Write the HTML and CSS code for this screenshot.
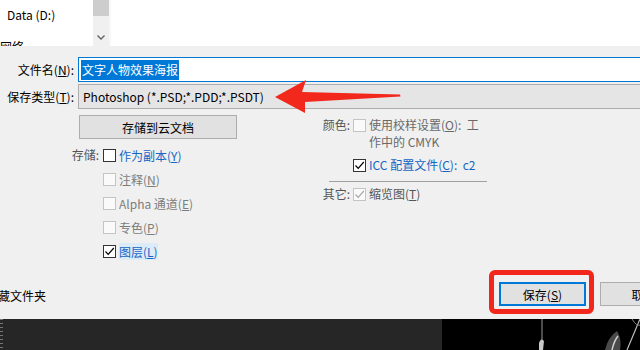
FILE: index.html
```html
<!DOCTYPE html>
<html lang="zh-CN">
<head>
<meta charset="utf-8">
<title>另存为</title>
<link rel="stylesheet" href="styles.css">
</head>
<body>
<div class="top">
  <div class="list">
    <div class="item">Data (D:)</div>
    <div class="item net">网络</div>
  </div>
  <div class="vscroll">
    <div class="thumb"></div>
    <svg class="chev" width="8" height="5" viewBox="0 0 8 5"><path d="M0.5 0.5 L4 4 L7.5 0.5" fill="none" stroke="#606060" stroke-width="1.3"/></svg>
  </div>
  <div class="pane"></div>
</div>

<div class="form">
  <div class="row">
    <div class="lbl">文件名(<u>N</u>):</div>
    <div class="input"><span class="sel">文字人物效果海报</span></div>
  </div>
  <div class="row r-type">
    <div class="lbl">保存类型(<u>T</u>):</div>
    <div class="select">Photoshop (*.PSD;*.PDD;*.PSDT)</div>
    <svg class="arrow" width="132" height="38" viewBox="0 0 132 38"><path d="M3 19 L34 2 L30 14 L128 16.5 L128.5 18.5 L33 24 L33 35 Z" fill="#f2281d"/></svg>
  </div>

  <div class="options">
    <div class="col-left">
      <button class="cloud">存储到云文档</button>
      <div class="group">
        <div class="glabel">存储:</div>
        <div class="checks">
          <div class="chk-row"><span class="cb"></span><span class="blue">作为副本(<u>Y</u>)</span></div>
          <div class="chk-row"><span class="cb dis"></span><span class="gray">注释(<u>N</u>)</span></div>
          <div class="chk-row"><span class="cb dis"></span><span class="gray">Alpha 通道(<u>E</u>)</span></div>
          <div class="chk-row"><span class="cb dis"></span><span class="gray">专色(<u>P</u>)</span></div>
          <div class="chk-row"><span class="cb on"><svg width="11" height="11" viewBox="0 0 11 11"><path d="M1.5 5.5 L4.2 8.3 L9.8 2" fill="none" stroke="#000" stroke-width="1.2"/></svg></span><span class="blue hl">图层(<u>L</u>)</span></div>
        </div>
      </div>
    </div>
    <div class="col-right">
      <div class="ropt">
        <div class="rlabel">颜色:</div>
        <span class="cb dis"></span>
        <div class="rtext gray2">使用校样设置(<u>O</u>):&nbsp; 工<br>作中的 CMYK</div>
      </div>
      <div class="ropt r-icc">
        <div class="rlabel"></div>
        <span class="cb on"><svg width="11" height="11" viewBox="0 0 11 11"><path d="M1.5 5.5 L4.2 8.3 L9.8 2" fill="none" stroke="#000" stroke-width="1.2"/></svg></span>
        <div class="rtext blue">ICC 配置文件(<u>C</u>):&nbsp; c2</div>
      </div>
      <div class="sep"></div>
      <div class="ropt r-other">
        <div class="rlabel">其它:</div>
        <span class="cb dis on"><svg width="11" height="11" viewBox="0 0 11 11"><path d="M1.5 5.5 L4.2 8.3 L9.8 2" fill="none" stroke="#a8a8a8" stroke-width="1.2"/></svg></span>
        <div class="rtext gray3">缩览图(<u>T</u>)</div>
      </div>
    </div>
  </div>
</div>

<div class="footer">
  <div class="hidden-txt">藏文件夹</div>
  <button class="btn save">保存(<u>S</u>)<span class="ring"></span></button>
  <button class="btn cancel">取消</button>
</div>

<div class="strip">
  <div class="strip-left"><span class="ticks"></span></div>
  <div class="strip-right">
    <svg width="198" height="31" viewBox="0 0 198 31">
      <path d="M100 0 L100 31" stroke="#9a9a9a" stroke-width="1"/>
      <path d="M97 24 Q99 18 102 22 L101 31 L97 31 Z" fill="#c8c8c8"/>
      <path d="M163 31 Q166 18 175 12 Q180 20 178 31 Z" fill="#4a4a4a"/>
      <path d="M170 31 Q172 22 176 17" stroke="#d0d0d0" stroke-width="1.5" fill="none"/>
      <path d="M185 31 L198 0" stroke="#bdbdbd" stroke-width="1.2" fill="none"/>
      <path d="M190 0 Q195 8 198 6" stroke="#888" stroke-width="1" fill="none"/>
    </svg>
  </div>
</div>
</body>
</html>
```

FILE: styles.css
```css
* { box-sizing: border-box; }
html, body { margin: 0; padding: 0; }
body {
  width: 640px;
  height: 350px;
  overflow: hidden;
  background: #f0f0f0;
  font-family: "Noto Sans CJK SC", "Microsoft YaHei", sans-serif;
  font-size: 12px;
  line-height: 17px;
  color: #000;
}
u { text-decoration: underline; text-underline-offset: 1px; }

/* top file list */
.top {
  height: 46px;
  display: flex;
  background: #fff;
}
.list {
  width: 93px;
  flex: none;
  padding: 7px 0 0 7px;
  overflow: hidden;
}
.list .item { line-height: 16px; white-space: nowrap; }
.list .net { margin-top: 16px; margin-left: -7px; }
.vscroll {
  width: 16px;
  flex: none;
  background: #f0f0f0;
  display: flex;
  flex-direction: column;
  align-items: center;
}
.thumb { width: 16px; height: 16px; background: #cdcdcd; }
.chev { margin-top: 19px; display: block; }
.pane { flex: 1; background: #fff; border-left: 2px solid #f7f7f7; }

/* form rows */
.form { padding-top: 11px; }
.row { display: flex; align-items: center; }
.lbl {
  width: 78px;
  flex: none;
  text-align: right;
  padding-right: 4px;
  white-space: nowrap;
}
.input {
  flex: none;
  width: 600px;
  height: 25px;
  border: 1px solid #0078d7;
  background: #fff;
  padding: 0 2px;
  display: flex;
  align-items: center;
}
.sel {
  background: #0078d7;
  color: #fff;
  line-height: 20px;
  padding: 0 1px;
}
.r-type { margin-top: 2px; position: relative; }
.select {
  flex: none;
  width: 600px;
  height: 25px;
  border: 1px solid #adadad;
  background: #e5e5e5;
  padding-left: 4px;
  display: flex;
  align-items: center;
  white-space: nowrap;
}
.arrow { position: absolute; left: 272px; top: -6px; }

/* options */
.options { display: flex; }
.col-left { width: 322px; flex: none; }
.cloud {
  display: block;
  margin: 6px 0 0 79px;
  width: 158px;
  height: 24px;
  padding: 0;
  border: 1px solid #adadad;
  background: #e1e1e1;
  font: inherit;
  color: #000;
}
.group { display: flex; margin-top: 4px; }
.glabel {
  width: 99px;
  flex: none;
  text-align: right;
  line-height: 24px;
  color: #555;
}
.checks { margin-left: 4px; }
.chk-row {
  height: 24px;
  display: flex;
  align-items: center;
  gap: 3px;
  white-space: nowrap;
}
.cb {
  width: 13px;
  height: 13px;
  flex: none;
  border: 1px solid #333;
  background: #fff;
  display: flex;
  align-items: center;
  justify-content: center;
}
.cb.dis { border-color: #c4c4c4; background: #fafafa; }
.cb svg { display: block; }
.blue { color: #1466c4; }
.gray { color: #7d7d7d; }
.gray2 { color: #6a6a6a; }
.gray3 { color: #555; }
.hl { background: #dcebf8; }

.col-right { padding-top: 7px; }
.ropt { display: flex; align-items: flex-start; }
.ropt .cb { margin-top: 3px; }
.rlabel {
  width: 31px;
  flex: none;
  text-align: right;
  padding-right: 3px;
  color: #555;
  white-space: nowrap;
}
.rtext { margin-left: 3px; white-space: nowrap; }
.r-icc { margin-top: 6px; }
.sep {
  margin: 8px 0 0 7px;
  width: 158px;
  height: 1px;
  background: #a0a0a0;
}
.r-other { margin-top: 3px; }

/* footer */
.footer {
  height: 56px;
  display: flex;
  align-items: flex-start;
  padding-top: 19px;
  overflow: hidden;
}
.hidden-txt {
  width: 501px;
  flex: none;
  line-height: 24px;
  padding-top: 2px;
  margin-left: -2px;
  white-space: nowrap;
}
.btn {
  width: 87px;
  height: 24px;
  flex: none;
  padding: 0;
  border: 1px solid #adadad;
  background: #e1e1e1;
  font: inherit;
  color: #000;
  position: relative;
}
.save { border: 2px solid #0078d7; }
.cancel { margin-left: 14px; }
.ring {
  position: absolute;
  left: -12px;
  top: -14px;
  width: 105px;
  height: 44px;
  border: 5px solid #f3261c;
  border-radius: 6px;
}

/* bottom strip */
.strip { height: 31px; display: flex; }
.strip-left { width: 442px; flex: none; background: #262626; position: relative; }
.ticks {
  display: block;
  width: 3px;
  height: 31px;
  background: repeating-linear-gradient(to bottom, #777 0 1px, #262626 1px 4px);
}
.strip-right { flex: 1; background: #000; }
.strip-right svg { display: block; }
```
